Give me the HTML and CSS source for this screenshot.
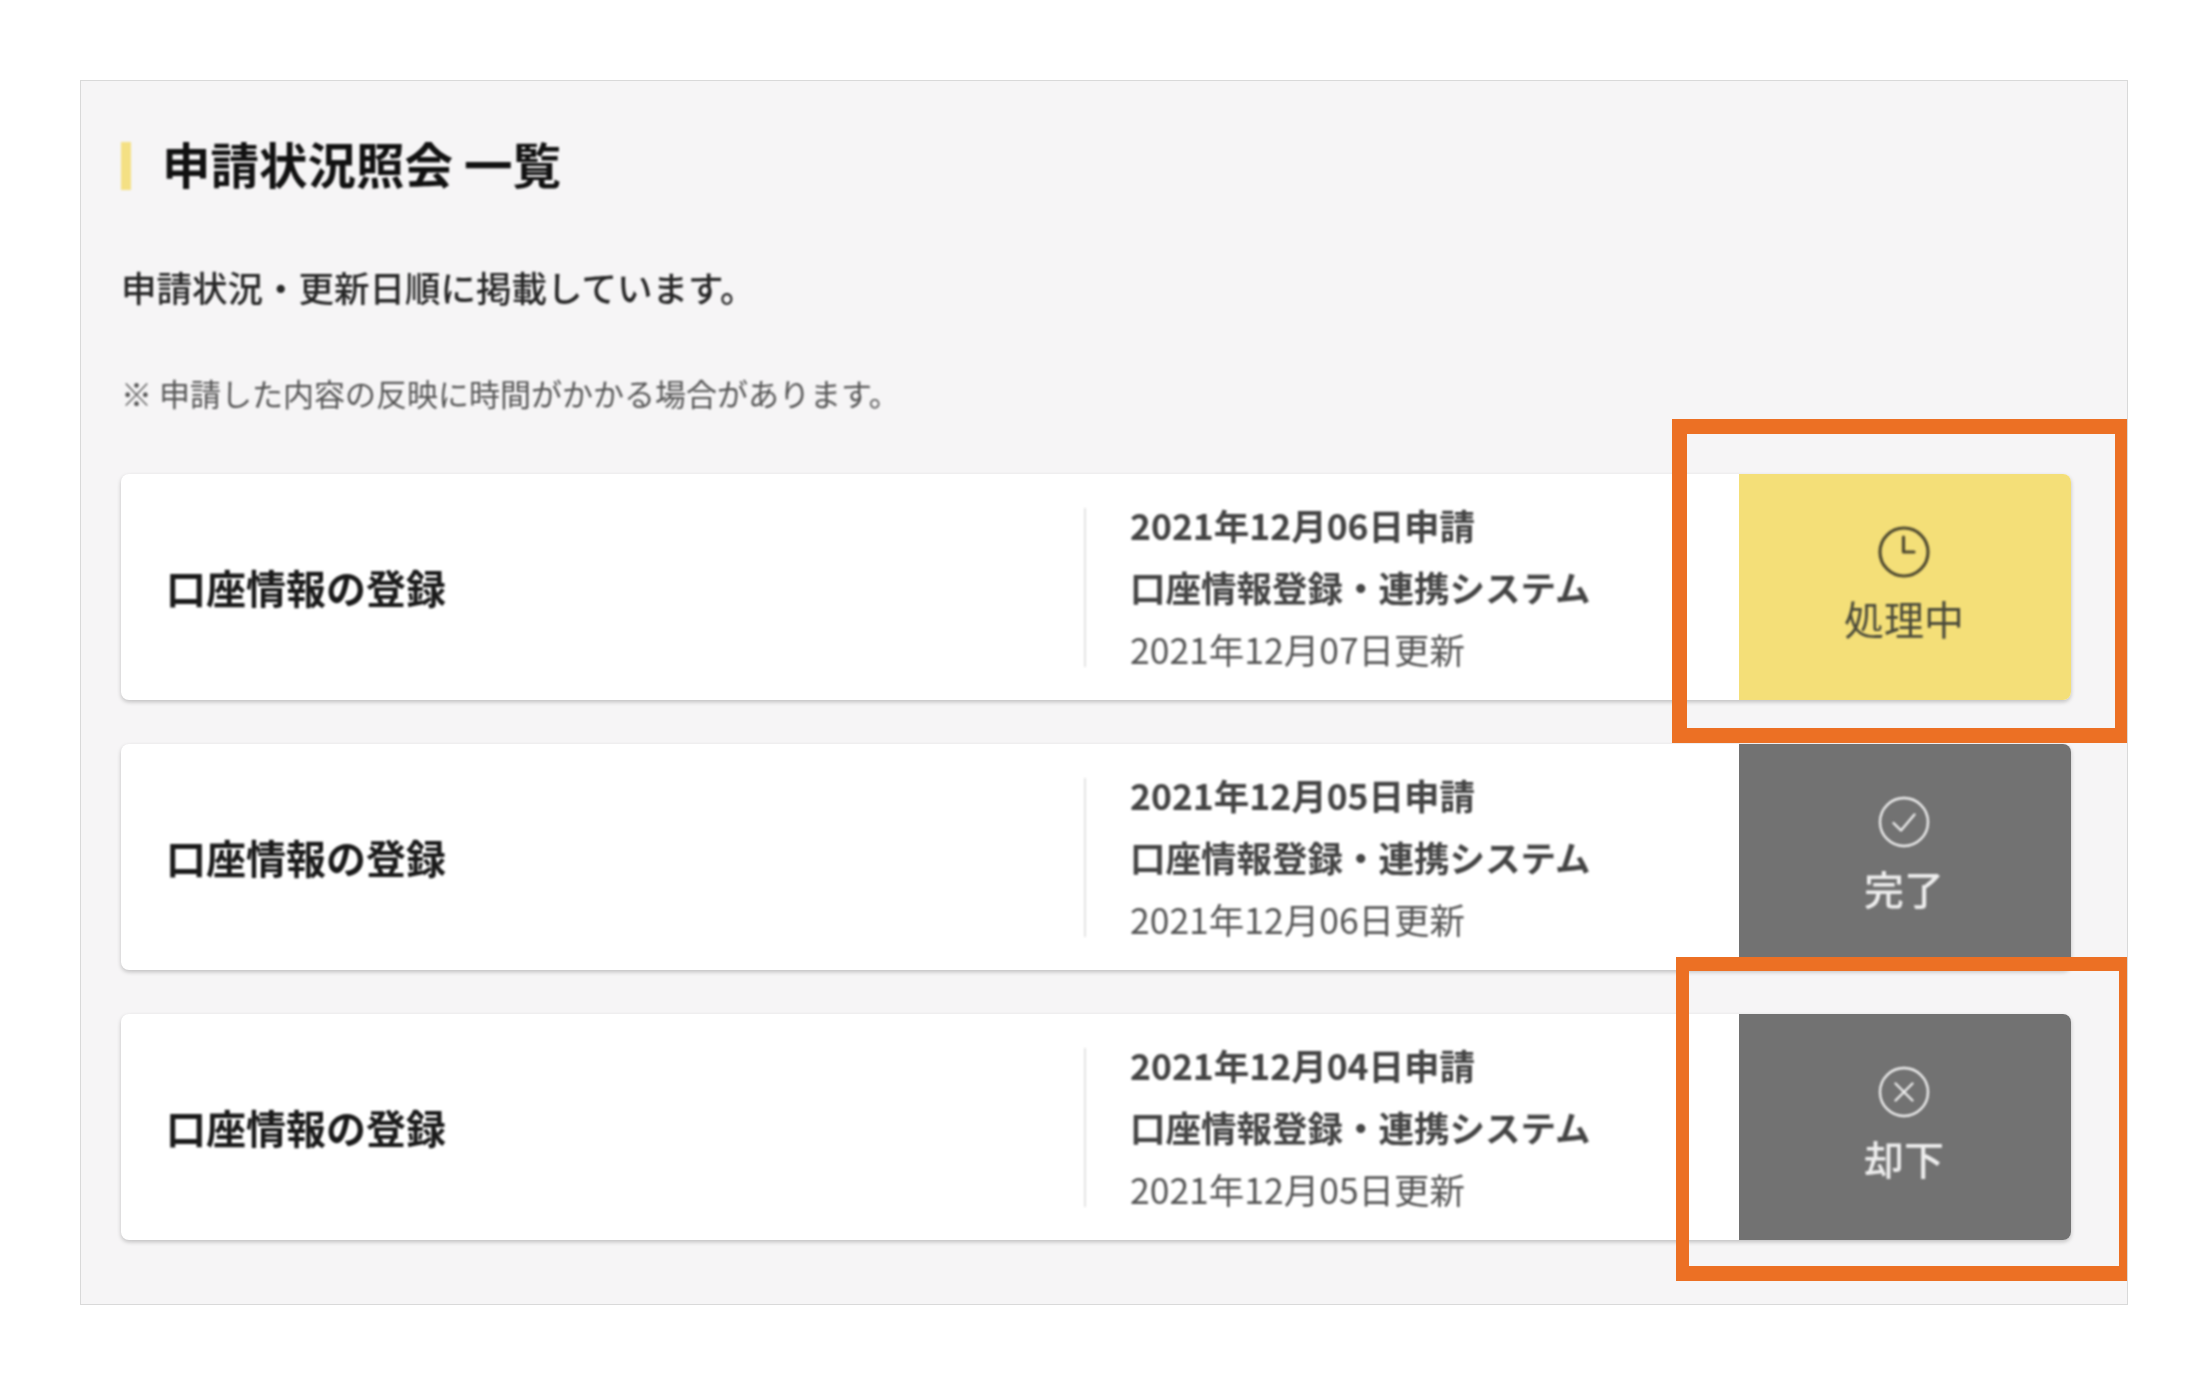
FILE: index.html
```html
<!DOCTYPE html>
<html lang="ja">
<head>
<meta charset="utf-8">
<title>申請状況照会 一覧</title>
<link rel="stylesheet" href="styles.css">
</head>
<body>
<main class="panel">
  <h1 class="title">申請状況照会 一覧</h1>
  <p class="lead">申請状況・更新日順に掲載しています。</p>
  <p class="note">※ 申請した内容の反映に時間がかかる場合があります。</p>
  <div class="list">
    <article class="card">
      <div class="card-name">口座情報の登録</div>
      <div class="meta">
        <div class="meta-strong">2021年12月06日申請</div>
        <div class="meta-strong">口座情報登録・連携システム</div>
        <div class="meta-light">2021年12月07日更新</div>
      </div>
      <div class="status status-pending">
        <svg class="status-icon" viewBox="0 0 52 52" fill="none" stroke="currentColor" stroke-width="3.2"><circle cx="26" cy="26" r="24"/><path d="M25.5 11V26H36" stroke-linecap="round" stroke-linejoin="round"/></svg>
        <span class="status-label">処理中</span>
      </div>
    </article>
    <article class="card">
      <div class="card-name">口座情報の登録</div>
      <div class="meta">
        <div class="meta-strong">2021年12月05日申請</div>
        <div class="meta-strong">口座情報登録・連携システム</div>
        <div class="meta-light">2021年12月06日更新</div>
      </div>
      <div class="status status-closed">
        <svg class="status-icon" viewBox="0 0 52 52" fill="none" stroke="currentColor" stroke-width="2.4"><circle cx="26" cy="26" r="24"/><path d="M15.5 27L23 34.5L36.5 18.5" stroke-linecap="round" stroke-linejoin="round"/></svg>
        <span class="status-label">完了</span>
      </div>
    </article>
    <article class="card">
      <div class="card-name">口座情報の登録</div>
      <div class="meta">
        <div class="meta-strong">2021年12月04日申請</div>
        <div class="meta-strong">口座情報登録・連携システム</div>
        <div class="meta-light">2021年12月05日更新</div>
      </div>
      <div class="status status-closed">
        <svg class="status-icon" viewBox="0 0 52 52" fill="none" stroke="currentColor" stroke-width="2.4"><circle cx="26" cy="26" r="24"/><path d="M17.5 17.5L34.5 34.5M34.5 17.5L17.5 34.5" stroke-linecap="round"/></svg>
        <span class="status-label">却下</span>
      </div>
    </article>
  </div>
  <div class="callout callout-first"></div>
  <div class="callout callout-second"></div>
</main>
</body>
</html>
```
FILE: styles.css
```css
* { box-sizing: border-box; }
html, body { margin: 0; background: #fff; }
body {
  padding: 80px 80px 0 80px;
  height: 1385px;
  overflow: hidden;
  font-family: "Noto Sans CJK JP", "Noto Sans", sans-serif;
  color: #222;
}
.panel {
  position: relative;
  height: 1225px;
  padding: 61px 40px 0;
  background: #f6f5f6;
  border: 1px solid #d9d9d9;
}
.title, .lead, .note, .card-name, .meta, .status-label, .status-icon { filter: blur(0.8px); }
.title {
  margin: 0;
  height: 48px;
  padding-left: 31px;
  border-left: 10px solid #f4e084;
  font-size: 48.5px;
  line-height: 43px;
  font-weight: 700;
  color: #111;
}
.lead {
  margin: 72px 0 0;
  font-size: 35.5px;
  line-height: 50px;
  font-weight: 500;
  color: #262626;
}
.note {
  margin: 61px 0 0;
  font-size: 31px;
  line-height: 40px;
  color: #555;
}
.list {
  margin-top: 61px;
  width: 1950px;
  display: flex;
  flex-direction: column;
  gap: 44px;
}
.card {
  height: 226px;
  display: flex;
  align-items: center;
  padding-left: 45px;
  background: #fff;
  border-radius: 8px;
  box-shadow: 0 2px 4px rgba(0, 0, 0, 0.22);
}
.card-name {
  width: 918px;
  font-size: 40px;
  font-weight: 700;
  color: #1a1a1a;
}
.meta {
  width: 655px;
  height: 159px;
  padding: 0 0 1px 44px;
  border-left: 2px solid #e4e4e4;
  display: flex;
  flex-direction: column;
  justify-content: center;
  font-size: 35.5px;
  line-height: 62px;
}
.meta-strong { font-weight: 700; color: #444; }
.meta-light { color: #555; }
.status {
  width: 332px;
  height: 100%;
  flex: none;
  margin-left: auto;
  display: flex;
  flex-direction: column;
  align-items: center;
  border-radius: 0 8px 8px 0;
  padding: 52px 2px 0 0;
}
.status-pending { background: #f4df78; color: #4f4a30; }
.status-closed { background: #727272; color: #eee; }
.status-icon { width: 52px; height: 52px; display: block; }
.status-label {
  margin-top: 13px;
  font-size: 40px;
  line-height: 54px;
  font-weight: 500;
}
.status-pending .status-label { font-weight: 400; color: #4a4a3a; }
.callout {
  position: absolute;
  right: 0;
  border: 15px solid #ec7024;
}
.callout-first { left: 1591px; top: 338px; height: 324px; border-right-width: 12px; }
.callout-second { left: 1595px; top: 876px; height: 324px; border-width: 14px 8px 15px 13px; }
```
